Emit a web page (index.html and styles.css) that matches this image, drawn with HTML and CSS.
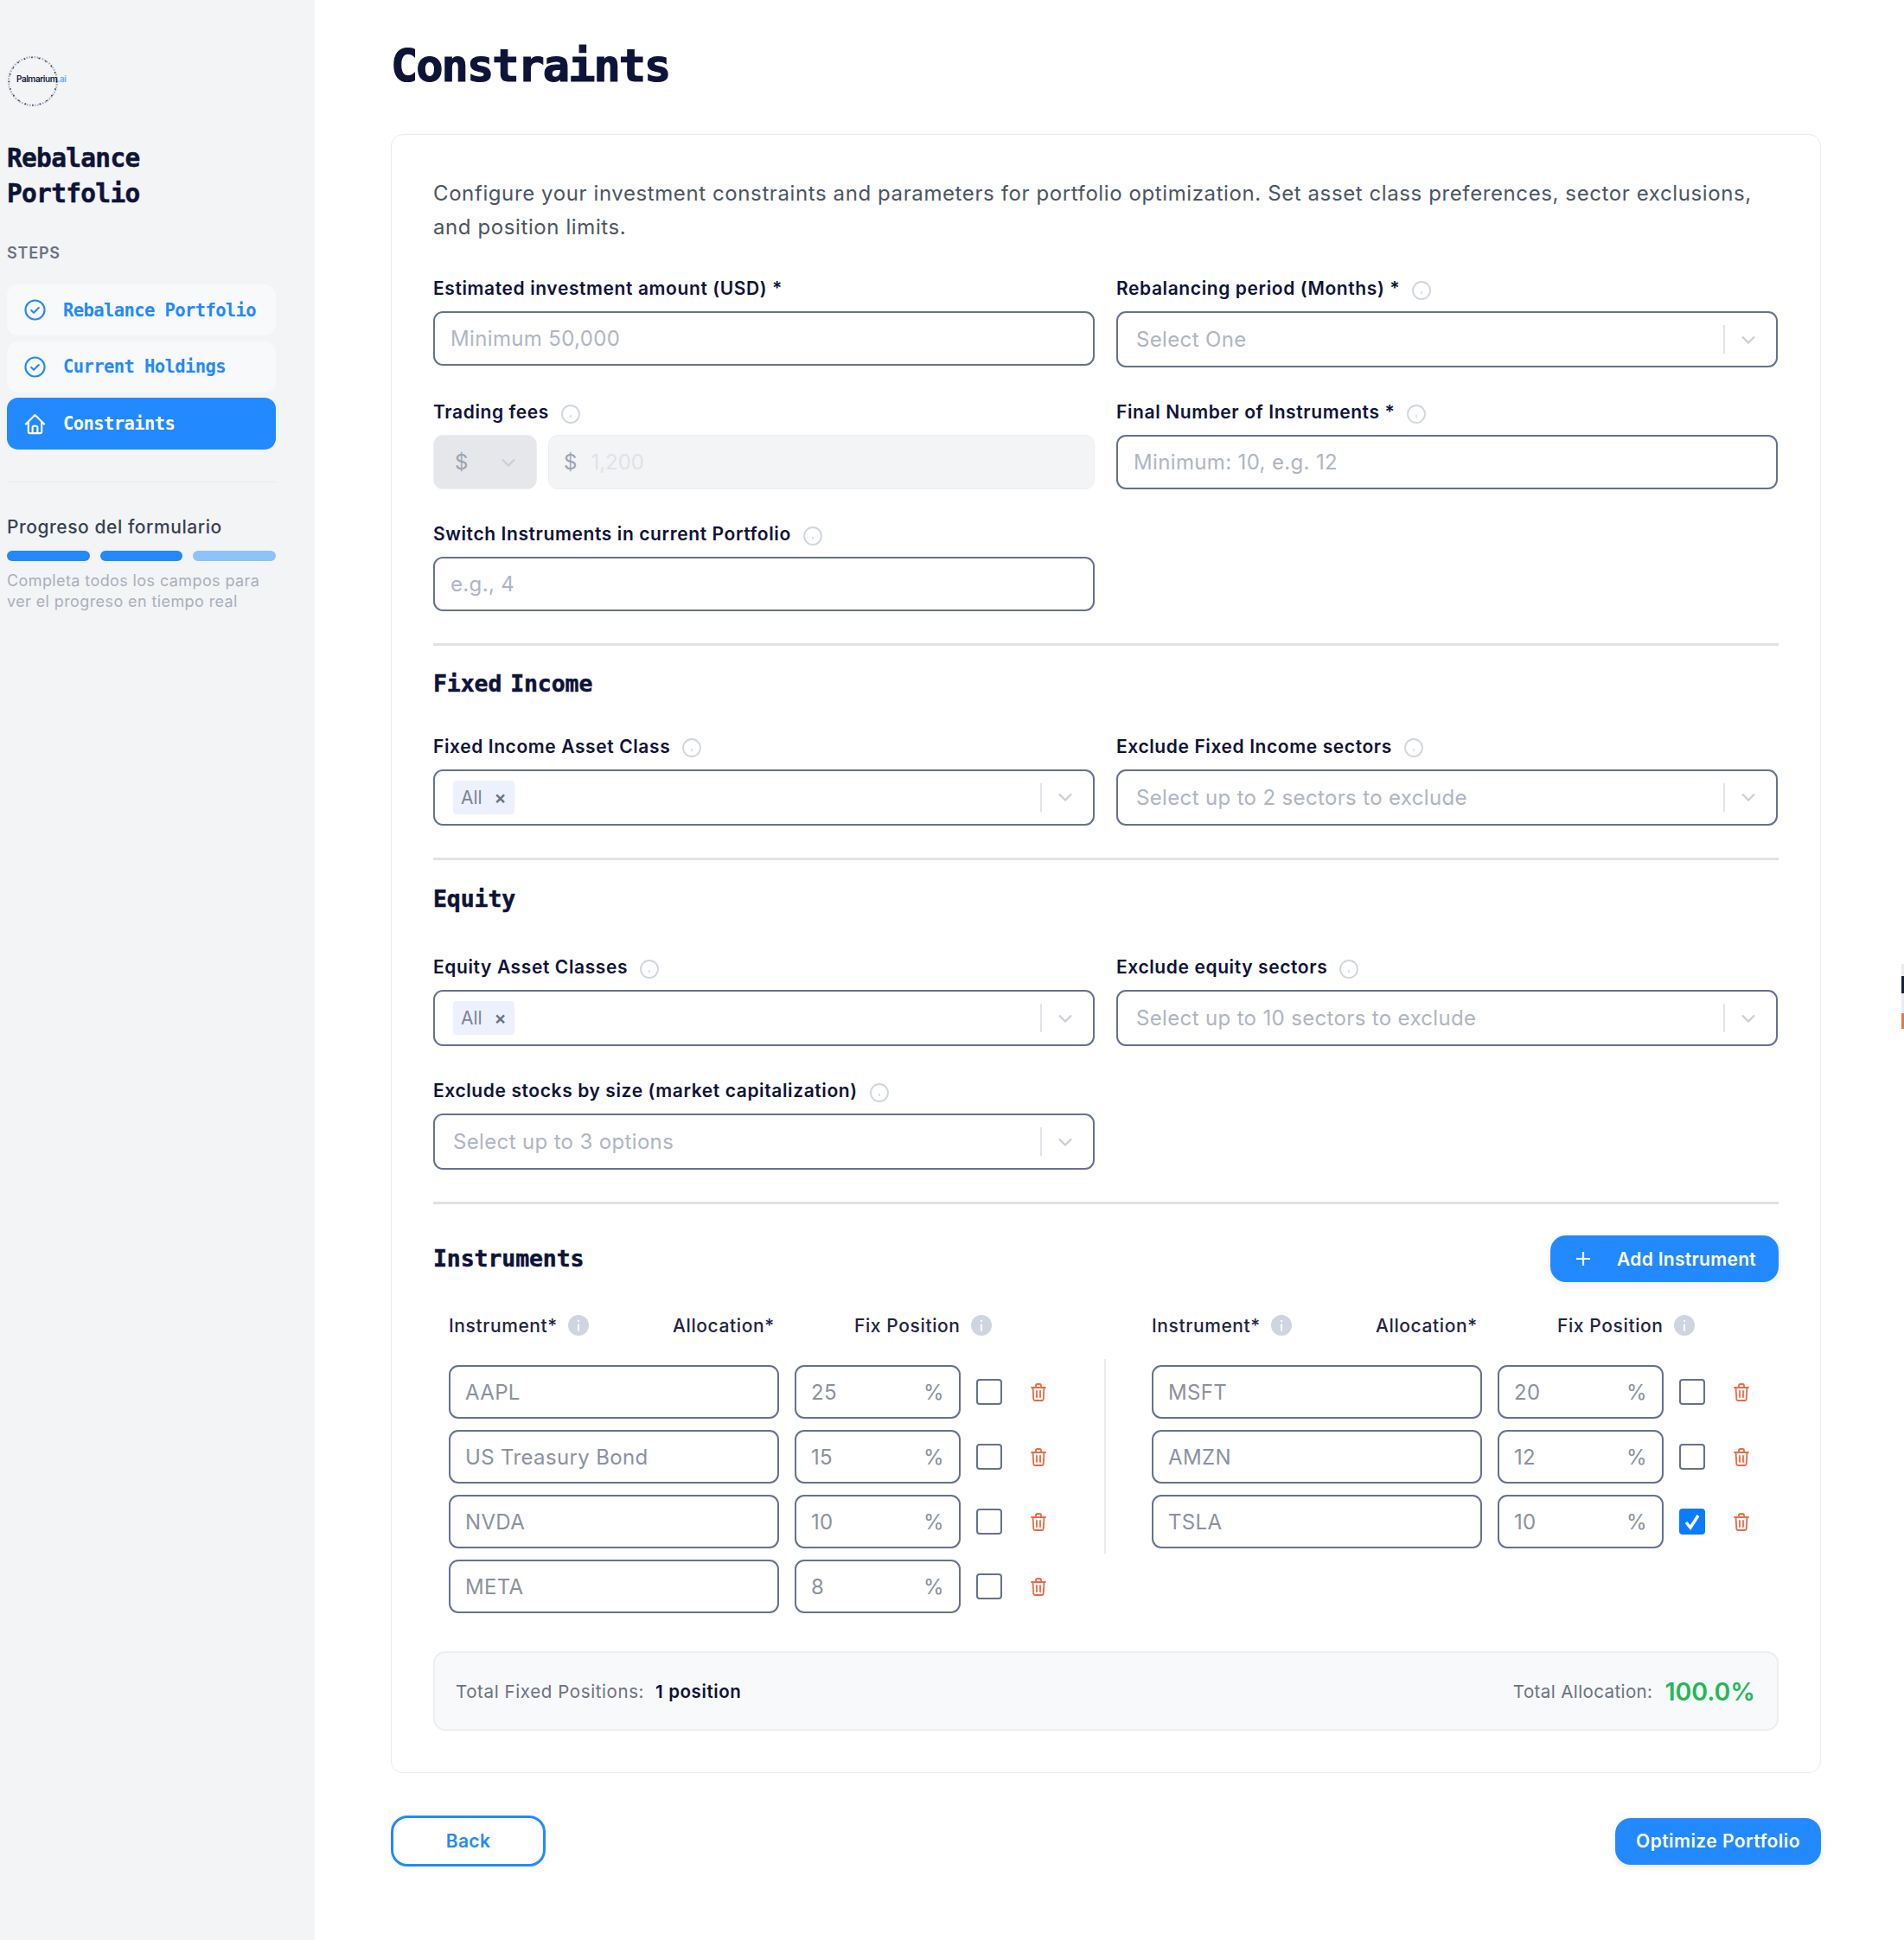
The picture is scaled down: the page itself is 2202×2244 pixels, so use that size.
FILE: index.html
```html
<!DOCTYPE html>
<html>
<head>
    <title>Constraints</title>
    <link rel="stylesheet" href="styles.css">
</head>
<body>
    <aside class="sidebar">
        <div class="logo">
            <svg width="70" height="60" viewBox="0 0 70 60">
                <circle cx="30" cy="29" r="28" fill="none" stroke="#a3a9b5" stroke-width="2.2" stroke-dasharray="1.5 1.6"/>
                <circle cx="30" cy="29" r="27.500" fill="none" stroke="#2f3550" stroke-width="1.500" stroke-dasharray="1.500 7"/>
                <text x="11" y="30" class="logo-text">Palmarium<tspan class="logo-ai">.ai</tspan></text>
            </svg>
        </div>
        <h2 class="side-title">Rebalance Portfolio</h2>
        <div class="steps-label">STEPS</div>
        <nav class="steps">
            <a class="step done">
                <svg class="step-icon" viewBox="0 0 26 26"><circle cx="13" cy="13" r="11.5" fill="none" stroke="currentColor" stroke-width="2.2"/><path d="M8.5 13.5l3 3 6-6" fill="none" stroke="currentColor" stroke-width="2.2" stroke-linecap="round" stroke-linejoin="round"/></svg>
                Rebalance Portfolio
            </a>
            <a class="step done">
                <svg class="step-icon" viewBox="0 0 26 26"><circle cx="13" cy="13" r="11.5" fill="none" stroke="currentColor" stroke-width="2.2"/><path d="M8.5 13.5l3 3 6-6" fill="none" stroke="currentColor" stroke-width="2.2" stroke-linecap="round" stroke-linejoin="round"/></svg>
                Current Holdings
            </a>
            <a class="step active">
                <svg class="step-icon" viewBox="0 0 26 26"><path d="M2 13L13 2l11 11M5 10.5V22a2 2 0 0 0 2 2h12a2 2 0 0 0 2-2V10.5M10 24v-7a1.5 1.5 0 0 1 1.5-1.5h3A1.5 1.5 0 0 1 16 17v7" fill="none" stroke="currentColor" stroke-width="2.2" stroke-linecap="round" stroke-linejoin="round"/></svg>
                Constraints
            </a>
        </nav>
        <div class="side-rule"></div>
        <div class="progress-title">Progreso del formulario</div>
        <div class="progress-bars">
            <span class="bar"></span>
            <span class="bar"></span>
            <span class="bar light"></span>
        </div>
        <p class="progress-note">Completa todos los campos para ver el progreso en tiempo real</p>
    </aside>

    <main class="main">
        <h1 class="page-title">Constraints</h1>

        <section class="card">
            <p class="intro">Configure your investment constraints and parameters for portfolio optimization. Set asset class preferences, sector exclusions, and position limits.</p>

            <div class="form-row">
                <div class="field">
                    <label class="label">Estimated investment amount (USD) *</label>
                    <div class="input placeholder">Minimum 50,000</div>
                </div>
                <div class="field">
                    <label class="label">Rebalancing period (Months) * <svg class="info" viewBox="0 0 22 22"><circle cx="11" cy="11" r="10" fill="none" stroke="#cfd5e0" stroke-width="1.8"/><path d="M11 12v3" stroke="#cfd5e0" stroke-width="1.4"/></svg></label>
                    <div class="select placeholder"><span class="select-value">Select One</span><span class="select-sep"></span><svg class="chevron" viewBox="0 0 18 10"><path d="M2 1.5l7 7 7-7" fill="none" stroke="currentColor" stroke-width="2.2"/></svg></div>
                </div>
            </div>

            <div class="form-row">
                <div class="field">
                    <label class="label">Trading fees <svg class="info" viewBox="0 0 22 22"><circle cx="11" cy="11" r="10" fill="none" stroke="#cfd5e0" stroke-width="1.8"/><path d="M11 12v3" stroke="#cfd5e0" stroke-width="1.4"/></svg></label>
                    <div class="fees">
                        <div class="fee-currency">$<svg class="chevron" viewBox="0 0 18 10"><path d="M2 1.5l7 7 7-7" fill="none" stroke="currentColor" stroke-width="2.2"/></svg></div>
                        <div class="fee-amount"><span class="fee-sign">$</span><span>1,200</span></div>
                    </div>
                </div>
                <div class="field">
                    <label class="label">Final Number of Instruments * <svg class="info" viewBox="0 0 22 22"><circle cx="11" cy="11" r="10" fill="none" stroke="#cfd5e0" stroke-width="1.8"/><path d="M11 12v3" stroke="#cfd5e0" stroke-width="1.4"/></svg></label>
                    <div class="input placeholder">Minimum: 10, e.g. 12</div>
                </div>
            </div>

            <div class="form-row">
                <div class="field">
                    <label class="label">Switch Instruments in current Portfolio <svg class="info" viewBox="0 0 22 22"><circle cx="11" cy="11" r="10" fill="none" stroke="#cfd5e0" stroke-width="1.8"/><path d="M11 12v3" stroke="#cfd5e0" stroke-width="1.4"/></svg></label>
                    <div class="input placeholder">e.g., 4</div>
                </div>
            </div>

            <hr class="rule">
            <h3 class="section-title">Fixed Income</h3>
            <div class="form-row">
                <div class="field">
                    <label class="label">Fixed Income Asset Class <svg class="info" viewBox="0 0 22 22"><circle cx="11" cy="11" r="10" fill="none" stroke="#cfd5e0" stroke-width="1.8"/><path d="M11 12v3" stroke="#cfd5e0" stroke-width="1.4"/></svg></label>
                    <div class="select"><span class="select-value"><span class="tag">All <b class="tag-x">×</b></span></span><span class="select-sep"></span><svg class="chevron" viewBox="0 0 18 10"><path d="M2 1.5l7 7 7-7" fill="none" stroke="currentColor" stroke-width="2.2"/></svg></div>
                </div>
                <div class="field">
                    <label class="label">Exclude Fixed Income sectors <svg class="info" viewBox="0 0 22 22"><circle cx="11" cy="11" r="10" fill="none" stroke="#cfd5e0" stroke-width="1.8"/><path d="M11 12v3" stroke="#cfd5e0" stroke-width="1.4"/></svg></label>
                    <div class="select placeholder"><span class="select-value">Select up to 2 sectors to exclude</span><span class="select-sep"></span><svg class="chevron" viewBox="0 0 18 10"><path d="M2 1.5l7 7 7-7" fill="none" stroke="currentColor" stroke-width="2.2"/></svg></div>
                </div>
            </div>

            <hr class="rule">
            <h3 class="section-title equity">Equity</h3>
            <div class="form-row">
                <div class="field">
                    <label class="label">Equity Asset Classes <svg class="info" viewBox="0 0 22 22"><circle cx="11" cy="11" r="10" fill="none" stroke="#cfd5e0" stroke-width="1.8"/><path d="M11 12v3" stroke="#cfd5e0" stroke-width="1.4"/></svg></label>
                    <div class="select"><span class="select-value"><span class="tag">All <b class="tag-x">×</b></span></span><span class="select-sep"></span><svg class="chevron" viewBox="0 0 18 10"><path d="M2 1.5l7 7 7-7" fill="none" stroke="currentColor" stroke-width="2.2"/></svg></div>
                </div>
                <div class="field">
                    <label class="label">Exclude equity sectors <svg class="info" viewBox="0 0 22 22"><circle cx="11" cy="11" r="10" fill="none" stroke="#cfd5e0" stroke-width="1.8"/><path d="M11 12v3" stroke="#cfd5e0" stroke-width="1.4"/></svg></label>
                    <div class="select placeholder"><span class="select-value">Select up to 10 sectors to exclude</span><span class="select-sep"></span><svg class="chevron" viewBox="0 0 18 10"><path d="M2 1.5l7 7 7-7" fill="none" stroke="currentColor" stroke-width="2.2"/></svg></div>
                </div>
            </div>
            <div class="form-row">
                <div class="field">
                    <label class="label">Exclude stocks by size (market capitalization) <svg class="info" viewBox="0 0 22 22"><circle cx="11" cy="11" r="10" fill="none" stroke="#cfd5e0" stroke-width="1.8"/><path d="M11 12v3" stroke="#cfd5e0" stroke-width="1.4"/></svg></label>
                    <div class="select placeholder"><span class="select-value">Select up to 3 options</span><span class="select-sep"></span><svg class="chevron" viewBox="0 0 18 10"><path d="M2 1.5l7 7 7-7" fill="none" stroke="currentColor" stroke-width="2.2"/></svg></div>
                </div>
            </div>

            <hr class="rule">
            <div class="instruments-head">
                <h3 class="section-title flat">Instruments</h3>
                <button class="btn-add"><svg class="plus" viewBox="0 0 18 18"><path d="M9 1v16M1 9h16" stroke="currentColor" stroke-width="2.2"/></svg>Add Instrument</button>
            </div>

            <div class="instruments">
                <div class="inst-col">
                    <div class="inst-header">
                        <span class="inst-h-name">Instrument* <svg class="info-solid" viewBox="0 0 24 24"><circle cx="12" cy="12" r="12" fill="#cfd5e0"/><path d="M12 10.5v8M12 6v2" stroke="#fff" stroke-width="2"/></svg></span>
                        <span class="inst-h-alloc">Allocation*</span>
                        <span class="inst-h-fix">Fix Position <svg class="info-solid" viewBox="0 0 24 24"><circle cx="12" cy="12" r="12" fill="#cfd5e0"/><path d="M12 10.5v8M12 6v2" stroke="#fff" stroke-width="2"/></svg></span>
                    </div>
                    <div class="inst-row">
                        <div class="inst-name">AAPL</div>
                        <div class="inst-alloc"><span>25</span><span>%</span></div>
                        <span class="check"></span>
                        <svg class="trash" viewBox="0 0 18 21"><path d="M1 5h16M6 5V2.5A1.5 1.5 0 0 1 7.5 1h3A1.5 1.5 0 0 1 12 2.5V5M2.5 5l.8 13.5A1.6 1.6 0 0 0 4.9 20h8.2a1.6 1.6 0 0 0 1.6-1.5L15.5 5M7 9v7M11 9v7" fill="none" stroke="currentColor" stroke-width="1.8" stroke-linecap="round"/></svg>
                    </div>
                    <div class="inst-row">
                        <div class="inst-name">US Treasury Bond</div>
                        <div class="inst-alloc"><span>15</span><span>%</span></div>
                        <span class="check"></span>
                        <svg class="trash" viewBox="0 0 18 21"><path d="M1 5h16M6 5V2.5A1.5 1.5 0 0 1 7.5 1h3A1.5 1.5 0 0 1 12 2.5V5M2.5 5l.8 13.5A1.6 1.6 0 0 0 4.9 20h8.2a1.6 1.6 0 0 0 1.6-1.5L15.5 5M7 9v7M11 9v7" fill="none" stroke="currentColor" stroke-width="1.8" stroke-linecap="round"/></svg>
                    </div>
                    <div class="inst-row">
                        <div class="inst-name">NVDA</div>
                        <div class="inst-alloc"><span>10</span><span>%</span></div>
                        <span class="check"></span>
                        <svg class="trash" viewBox="0 0 18 21"><path d="M1 5h16M6 5V2.5A1.5 1.5 0 0 1 7.5 1h3A1.5 1.5 0 0 1 12 2.5V5M2.5 5l.8 13.5A1.6 1.6 0 0 0 4.9 20h8.2a1.6 1.6 0 0 0 1.6-1.5L15.5 5M7 9v7M11 9v7" fill="none" stroke="currentColor" stroke-width="1.8" stroke-linecap="round"/></svg>
                    </div>
                    <div class="inst-row">
                        <div class="inst-name">META</div>
                        <div class="inst-alloc"><span>8</span><span>%</span></div>
                        <span class="check"></span>
                        <svg class="trash" viewBox="0 0 18 21"><path d="M1 5h16M6 5V2.5A1.5 1.5 0 0 1 7.5 1h3A1.5 1.5 0 0 1 12 2.5V5M2.5 5l.8 13.5A1.6 1.6 0 0 0 4.9 20h8.2a1.6 1.6 0 0 0 1.6-1.5L15.5 5M7 9v7M11 9v7" fill="none" stroke="currentColor" stroke-width="1.8" stroke-linecap="round"/></svg>
                    </div>
                </div>
                <div class="inst-col right">
                    <div class="inst-header">
                        <span class="inst-h-name">Instrument* <svg class="info-solid" viewBox="0 0 24 24"><circle cx="12" cy="12" r="12" fill="#cfd5e0"/><path d="M12 10.5v8M12 6v2" stroke="#fff" stroke-width="2"/></svg></span>
                        <span class="inst-h-alloc">Allocation*</span>
                        <span class="inst-h-fix">Fix Position <svg class="info-solid" viewBox="0 0 24 24"><circle cx="12" cy="12" r="12" fill="#cfd5e0"/><path d="M12 10.5v8M12 6v2" stroke="#fff" stroke-width="2"/></svg></span>
                    </div>
                    <div class="inst-row">
                        <div class="inst-name">MSFT</div>
                        <div class="inst-alloc"><span>20</span><span>%</span></div>
                        <span class="check"></span>
                        <svg class="trash" viewBox="0 0 18 21"><path d="M1 5h16M6 5V2.5A1.5 1.5 0 0 1 7.5 1h3A1.5 1.5 0 0 1 12 2.5V5M2.5 5l.8 13.5A1.6 1.6 0 0 0 4.9 20h8.2a1.6 1.6 0 0 0 1.6-1.5L15.5 5M7 9v7M11 9v7" fill="none" stroke="currentColor" stroke-width="1.8" stroke-linecap="round"/></svg>
                    </div>
                    <div class="inst-row">
                        <div class="inst-name">AMZN</div>
                        <div class="inst-alloc"><span>12</span><span>%</span></div>
                        <span class="check"></span>
                        <svg class="trash" viewBox="0 0 18 21"><path d="M1 5h16M6 5V2.5A1.5 1.5 0 0 1 7.5 1h3A1.5 1.5 0 0 1 12 2.5V5M2.5 5l.8 13.5A1.6 1.6 0 0 0 4.9 20h8.2a1.6 1.6 0 0 0 1.6-1.5L15.5 5M7 9v7M11 9v7" fill="none" stroke="currentColor" stroke-width="1.8" stroke-linecap="round"/></svg>
                    </div>
                    <div class="inst-row">
                        <div class="inst-name">TSLA</div>
                        <div class="inst-alloc"><span>10</span><span>%</span></div>
                        <span class="check checked"><svg viewBox="0 0 30 30"><path d="M8 16l5 6 9-14" fill="none" stroke="#fff" stroke-width="3.5"/></svg></span>
                        <svg class="trash" viewBox="0 0 18 21"><path d="M1 5h16M6 5V2.5A1.5 1.5 0 0 1 7.5 1h3A1.5 1.5 0 0 1 12 2.5V5M2.5 5l.8 13.5A1.6 1.6 0 0 0 4.9 20h8.2a1.6 1.6 0 0 0 1.6-1.5L15.5 5M7 9v7M11 9v7" fill="none" stroke="currentColor" stroke-width="1.8" stroke-linecap="round"/></svg>
                    </div>
                </div>
            </div>

            <div class="summary">
                <div><span class="summary-label">Total Fixed Positions:</span><strong class="summary-count">1 position</strong></div>
                <div class="summary-right"><span class="summary-label">Total Allocation:</span><strong class="summary-total">100.0%</strong></div>
            </div>
        </section>

        <div class="actions">
            <button class="btn-back">Back</button>
            <button class="btn-primary">Optimize Portfolio</button>
        </div>
    </main>

    <div class="peek"><span class="peek-dot"></span><span class="peek-foot"></span></div>
</body>
</html>
```
FILE: styles.css
```css
* {
    box-sizing: border-box;
}

body {
    font-family: Inter, "Liberation Sans", sans-serif;
    background-color: #fff;
    color: #0e1338;
    margin: 0;
    display: flex;
    min-height: 2244px;
    position: relative;
    overflow: hidden;
}

/* sidebar */
.sidebar {
    width: 364px;
    flex-shrink: 0;
    background-color: #f3f4f6;
    padding: 65px 45px 0 8px;
}

.logo {
    height: 60px;
    display: flex;
}

.logo-text {
    font-family: Inter, sans-serif;
    font-size: 10px;
    font-weight: 600;
    letter-spacing: -0.45px;
    fill: #161b3d;
}

.logo-ai {
    fill: #6aa9f5;
}

.side-title {
    font-family: "DejaVu Sans Mono", monospace;
    font-size: 29.5px;
    font-weight: 700;
    letter-spacing: -0.7px;
    -webkit-text-stroke: 0.5px #0e1338;
    line-height: 41px;
    margin: 38px 0 0;
    width: 220px;
}

.steps-label {
    font-size: 18px;
    font-weight: 600;
    letter-spacing: 0.8px;
    color: #6b7280;
    line-height: 24px;
    margin-top: 36px;
}

.steps {
    margin-top: 24px;
    display: flex;
    flex-direction: column;
    gap: 6.5px;
}

.step {
    height: 59px;
    border-radius: 13px;
    background-color: #f8f9fb;
    color: #2389ff;
    display: flex;
    align-items: center;
    gap: 20px;
    padding-left: 20px;
    font-family: "DejaVu Sans Mono", monospace;
    font-size: 20.5px;
    font-weight: 700;
    letter-spacing: -0.6px;
}

.step.active {
    background-color: #2389ff;
    color: #fff;
    height: 60px;
}

.step-icon {
    width: 25px;
    height: 25px;
    flex-shrink: 0;
}

.side-rule {
    height: 1px;
    background-color: #e8eaed;
    margin-top: 37px;
}

.progress-title {
    font-size: 21px;
    font-weight: 500;
    color: #374151;
    line-height: 28px;
    letter-spacing: 0.55px;
    margin-top: 38px;
}

.progress-bars {
    display: flex;
    gap: 12px;
    margin-top: 13px;
}

.bar {
    flex: 1;
    height: 12px;
    border-radius: 6px;
    background-color: #2389ff;
}

.bar.light {
    background-color: #8cc2fd;
}

.progress-note {
    font-size: 18px;
    line-height: 24px;
    color: #a9afbb;
    letter-spacing: 0.4px;
    margin: 11px 0 0;
}

/* main column */
.main {
    flex: 1;
    padding: 46px 96px 0 88px;
}

.page-title {
    font-family: "DejaVu Sans Mono", monospace;
    font-size: 52px;
    font-weight: 700;
    letter-spacing: -2px;
    -webkit-text-stroke: 1.2px #0e1338;
    line-height: 60px;
    margin: 0 0 49px;
}

.card {
    border: 1px solid #e9ebef;
    border-radius: 14px;
    padding: 48px;
}

.intro {
    font-size: 24px;
    line-height: 39px;
    letter-spacing: 0.6px;
    color: #4b5563;
    margin: 0 0 37px;
}

.form-row {
    display: grid;
    grid-template-columns: 765px 765px;
    gap: 25px;
    align-items: start;
    margin-bottom: 37px;
}

.label {
    display: flex;
    align-items: center;
    gap: 8px;
    height: 28px;
    padding-top: 1px;
    margin-bottom: 13px;
    font-size: 21px;
    font-weight: 600;
    letter-spacing: 0.6px;
    white-space: pre;
}

.info {
    width: 22px;
    height: 22px;
    margin-top: 4px;
    flex-shrink: 0;
}

.input {
    height: 63px;
    border: 2px solid #667191;
    border-radius: 11px;
    padding-left: 18px;
    display: flex;
    align-items: center;
    font-size: 24px;
    letter-spacing: 0.35px;
}

.placeholder {
    color: #afb5c2;
}

.select {
    height: 65px;
    border: 2px solid #667191;
    border-radius: 11px;
    padding: 0 23px 0 21px;
    display: flex;
    align-items: center;
    font-size: 24px;
    letter-spacing: 0.35px;
}

.select-value {
    flex: 1;
}

.select-sep {
    width: 2px;
    height: 33px;
    background-color: #e0e3e8;
    margin-right: 18px;
}

.chevron {
    width: 18px;
    height: 10px;
    color: #c9ced8;
}

.tag {
    display: inline-block;
    height: 39px;
    line-height: 39px;
    padding: 0 9px;
    border-radius: 4px;
    background-color: #edf1fd;
    color: #7b8394;
    font-size: 21px;
    letter-spacing: 0;
}

.tag-x {
    margin-left: 8px;
    color: #6b7280;
    font-weight: 600;
}

.fees {
    display: flex;
    gap: 13px;
}

.fee-currency {
    width: 120px;
    height: 63px;
    border-radius: 11px;
    background-color: #e5e7eb;
    border: 1px solid #eceef1;
    color: #9ca3af;
    font-size: 24px;
    display: flex;
    align-items: center;
    justify-content: space-between;
    padding: 0 23px 0 24px;
}

.fee-amount {
    flex: 1;
    height: 63px;
    border-radius: 11px;
    background-color: #f3f4f6;
    border: 1px solid #eceef1;
    color: #dfe2e7;
    font-size: 24px;
    display: flex;
    align-items: center;
    gap: 16px;
    padding-left: 17px;
}

.fee-sign {
    color: #9ca3af;
}

.rule {
    border: 0;
    height: 3px;
    background-color: #e0e2e6;
    margin: 0 0 24px;
}

.section-title {
    font-family: "DejaVu Sans Mono", monospace;
    font-size: 26.5px;
    font-weight: 700;
    letter-spacing: -0.1px;
    word-spacing: -6px;
    -webkit-text-stroke: 0.5px #0e1338;
    line-height: 40px;
    margin: 0 0 37.5px;
}

.section-title.equity {
    margin: 25px 0 44.5px;
}

.section-title.flat {
    margin: 0;
}

/* instruments table */
.instruments-head {
    display: flex;
    justify-content: space-between;
    align-items: center;
    margin: 36px 0 36px;
}

.btn-add {
    width: 264px;
    height: 54px;
    border: 0;
    border-radius: 18px;
    background-color: #2389ff;
    color: #fff;
    font-family: inherit;
    font-size: 21px;
    font-weight: 600;
    letter-spacing: 0.3px;
    display: flex;
    align-items: center;
    gap: 30px;
    padding-left: 29px;
    box-shadow: 0 3px 8px rgba(0, 0, 0, 0.08);
}

.plus {
    width: 18px;
    height: 18px;
}

.instruments {
    display: grid;
    grid-template-columns: 776px 778px;
}

.inst-col {
    padding-left: 18px;
}

.inst-col.right {
    padding-left: 55px;
    position: relative;
}

.inst-col.right::before {
    content: "";
    position: absolute;
    left: 0;
    top: 53px;
    height: 225px;
    width: 2px;
    background-color: #e8eaed;
}

.inst-header {
    display: flex;
    height: 28px;
    align-items: center;
    margin-bottom: 32px;
    font-size: 21px;
    font-weight: 500;
    color: #1f2544;
    letter-spacing: 0.6px;
}

.inst-h-name {
    width: 259px;
    display: flex;
    align-items: center;
    gap: 12px;
}

.inst-h-alloc {
    width: 210px;
}

.inst-h-fix {
    display: flex;
    align-items: center;
    gap: 12px;
}

.info-solid {
    width: 24px;
    height: 24px;
}

.inst-row {
    display: flex;
    align-items: center;
    height: 62px;
    margin-bottom: 13px;
    color: #8b91a1;
    font-size: 24px;
    letter-spacing: 0.35px;
}

.inst-name {
    width: 382px;
    height: 62px;
    border: 2px solid #667191;
    border-radius: 11px;
    display: flex;
    align-items: center;
    padding-left: 17px;
}

.inst-alloc {
    width: 192px;
    height: 62px;
    margin-left: 18px;
    border: 2px solid #667191;
    border-radius: 11px;
    display: flex;
    align-items: center;
    justify-content: space-between;
    padding: 0 17px;
}

.check {
    width: 30px;
    height: 30px;
    margin-left: 18px;
    border: 2px solid #667191;
    border-radius: 4px;
    display: block;
}

.check.checked {
    background-color: #0a7cff;
    border: 0;
}

.check svg {
    display: block;
}

.trash {
    width: 18px;
    height: 21px;
    margin-left: 33px;
    color: #ea6a45;
}

.summary {
    height: 92px;
    margin-top: 31px;
    border: 2px solid #eceef1;
    border-radius: 14px;
    background-color: #f8f9fb;
    display: flex;
    align-items: center;
    justify-content: space-between;
    padding: 0 25px 0 24px;
    font-size: 20.5px;
    letter-spacing: 0.6px;
}

.summary-label {
    color: #6b7280;
}

.summary-count {
    font-weight: 600;
    margin-left: 13px;
}

.summary-right {
    display: flex;
    align-items: center;
    letter-spacing: 0.4px;
}

.summary-total {
    color: #22b856;
    font-size: 28.5px;
    font-weight: 600;
    margin-left: 14px;
    letter-spacing: 0;
}

/* bottom buttons */
.actions {
    display: flex;
    justify-content: space-between;
    align-items: center;
    margin-top: 49px;
}

.btn-back {
    width: 179px;
    height: 59px;
    border: 3px solid #2389ff;
    border-radius: 19px;
    background-color: #fff;
    color: #2389ff;
    font-family: inherit;
    font-size: 21px;
    font-weight: 600;
    letter-spacing: 0.3px;
}

.btn-primary {
    width: 238px;
    height: 54px;
    border: 0;
    border-radius: 18px;
    background-color: #2389ff;
    color: #fff;
    font-family: inherit;
    font-size: 21px;
    font-weight: 600;
    letter-spacing: 0.45px;
    box-shadow: 0 3px 8px rgba(0, 0, 0, 0.08);
}

/* sliver of a floating widget cut off by the right edge */
.peek {
    position: absolute;
    right: 0;
    top: 1115px;
    width: 3px;
    height: 75px;
    background-color: #e8ebf0;
}

.peek-dot {
    position: absolute;
    left: 0;
    top: 14px;
    width: 3px;
    height: 20px;
    background-color: #1a1d45;
}

.peek-foot {
    position: absolute;
    left: 0;
    bottom: 0;
    width: 3px;
    height: 18px;
    background-color: #e27a50;
}
```
